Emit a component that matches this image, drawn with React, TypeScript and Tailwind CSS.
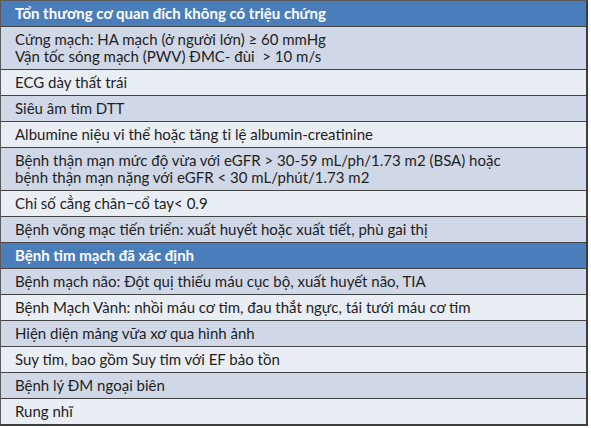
import React from "react";

type Row = { lines: string[]; header?: boolean };

const rows: Row[] = [
  { lines: ["Tổn thương cơ quan đích không có triệu chứng"], header: true },
  {
    lines: [
      "Cứng mạch: HA mạch (ở người lớn) ≥ 60 mmHg",
      "Vận tốc sóng mạch (PWV) ĐMC- đùi  > 10 m/s",
    ],
  },
  { lines: ["ECG dày thất trái"] },
  { lines: ["Siêu âm tim DTT"] },
  { lines: ["Albumine niệu vi thể hoặc tăng tỉ lệ albumin-creatinine"] },
  {
    lines: [
      "Bệnh thận mạn mức độ vừa với eGFR > 30-59 mL/ph/1.73 m2 (BSA) hoặc",
      "bệnh thận mạn nặng với eGFR < 30 mL/phút/1.73 m2",
    ],
  },
  { lines: ["Chỉ số cẳng chân−cổ tay< 0.9"] },
  { lines: ["Bệnh võng mạc tiến triển: xuất huyết hoặc xuất tiết, phù gai thị"] },
  { lines: ["Bệnh tim mạch đã xác định"], header: true },
  { lines: ["Bệnh mạch não: Đột quị thiếu máu cục bộ, xuất huyết não, TIA"] },
  { lines: ["Bệnh Mạch Vành: nhồi máu cơ tim, đau thắt ngực, tái tưới máu cơ tim"] },
  { lines: ["Hiện diện mảng vữa xơ qua hình ảnh"] },
  { lines: ["Suy tim, bao gồm Suy tim với EF bảo tồn"] },
  { lines: ["Bệnh lý ĐM ngoại biên"] },
  { lines: ["Rung nhĩ"] },
];

export default function App() {
  let band = 0;
  return (
    <div className="w-[591px] h-[428px] bg-white font-['Lato','Liberation_Sans',sans-serif]">
      <div className="w-[588px] border-t border-l border-[#5a5a5a] border-r-2 border-r-[#3a3d44] border-b-2 border-b-[#3a3d44]">
        {rows.map((row, i) => {
          if (row.header) band = 0;
          else band++;
          const bg = row.header
            ? "bg-[#4a7ebb] text-white font-bold"
            : band % 2 === 1
            ? "bg-[#d0d8e8] text-[#1e1e1e]"
            : "bg-[#e9edf4] text-[#1e1e1e]";
          const last = i === rows.length - 1;
          return (
            <div
              key={i}
              className={`${bg} ${last ? "" : "border-b border-[#444]"} pl-[14px] py-[4px] text-[15px] leading-[17px] whitespace-pre`}
            >
              {row.lines.map((l, j) => (
                <div key={j}>{l}</div>
              ))}
            </div>
          );
        })}
      </div>
    </div>
  );
}
